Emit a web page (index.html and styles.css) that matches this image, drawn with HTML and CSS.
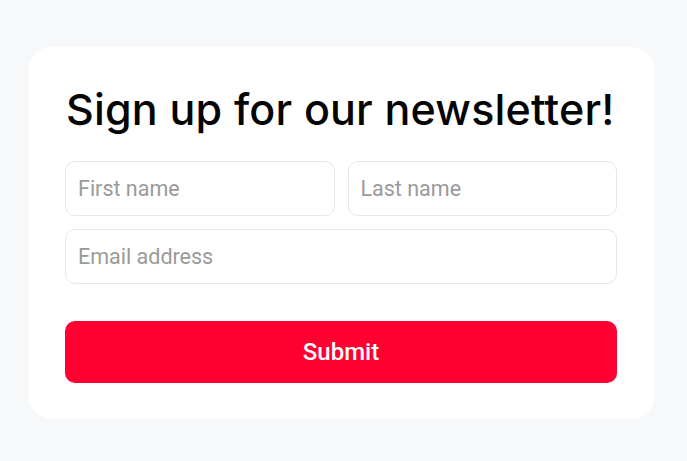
FILE: index.html
```html
<!DOCTYPE html>
<html>
<head>
<meta charset="utf-8">
<link rel="stylesheet" href="styles.css">
</head>
<body>
<div class="card">
  <h1 class="title">Sign up for our newsletter!</h1>
  <form class="form">
    <div class="row">
      <input class="field" type="text" placeholder="First name">
      <input class="field" type="text" placeholder="Last name">
    </div>
    <input class="field field-wide" type="email" placeholder="Email address">
    <button class="submit" type="button">Submit</button>
  </form>
</div>
</body>
</html>
```
FILE: styles.css
```css
html, body {
  margin: 0;
  padding: 0;
  background: #f7f8fa;
}
body {
  padding: 47px 0 0 29px;
}
.card {
  box-sizing: border-box;
  width: 625px;
  height: 372px;
  background: #ffffff;
  border-radius: 22px;
  padding: 36px 37px 36px 36px;
}
.title {
  margin: 0 0 26px 1px;
  font-family: Inter, "Noto Sans", sans-serif;
  font-weight: 500;
  font-size: 43px;
  line-height: 52px;
  height: 52px;
  color: #050505;
  letter-spacing: 0.18px;
  white-space: nowrap;
}
.form {
  display: flex;
  flex-direction: column;
  gap: 13px;
}
.row {
  display: flex;
  gap: 13px;
}
.field {
  box-sizing: border-box;
  flex: 1;
  min-width: 0;
  height: 55px;
  border: 1px solid #e6e6e6;
  border-radius: 10px;
  padding: 0 12px;
  font-family: Roboto, sans-serif;
  font-size: 21.5px;
  color: #333;
  background: #fff;
  outline: none;
}
.field-wide {
  flex: none;
  width: 100%;
}
.field::placeholder {
  color: #9a9a9a;
}
.submit {
  margin-top: 24px;
  height: 62px;
  border: none;
  border-radius: 10px;
  background: #ff0030;
  color: #fff;
  font-family: Roboto, sans-serif;
  font-weight: 500;
  font-size: 24px;
  cursor: pointer;
}
```
